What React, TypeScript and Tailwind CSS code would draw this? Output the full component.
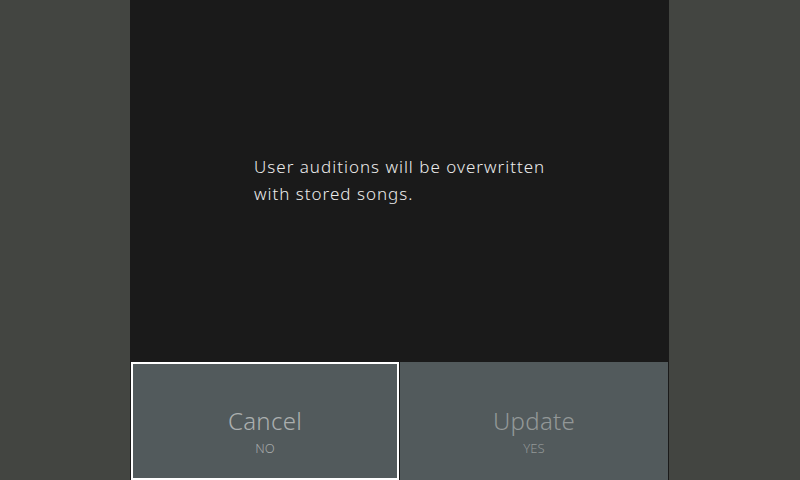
import React from 'react'

function DialogButton({
  label,
  sub,
  selected,
  dim,
}: {
  label: string
  sub: string
  selected?: boolean
  dim?: boolean
}) {
  return (
    <button
      className={
        'flex-1 flex flex-col items-center justify-center bg-[#525a5c] ' +
        (selected ? 'border-2 border-white' : 'border-2 border-transparent')
      }
    >
      <span
        className={
          'text-[24px] leading-[28px] pt-[20px] font-light tracking-[0.3px] ' +
          (dim ? 'text-[#939898]' : 'text-[#abafaf]')
        }
      >
        {label}
      </span>
      <span
        className={
          'text-[13px] leading-[16px] mt-[5px] font-light ' +
          (dim ? 'text-[#939898]' : 'text-[#a5a9a9]')
        }
      >
        {sub}
      </span>
    </button>
  )
}

export default function App() {
  return (
    <div
      className="w-[800px] h-[480px] flex bg-[#434541] overflow-hidden"
      style={{ fontFamily: '"Noto Sans", "DejaVu Sans", sans-serif' }}
    >
      <div className="w-[130px]" />
      <div className="w-[539px] h-full flex flex-col bg-[#1a1a1a]">
        <div className="flex-1 pl-[124px] pt-[153px]">
          <p className="text-[17px] leading-[27px] tracking-[1px] text-[#ececec] font-light w-[360px]">
            User auditions will be overwritten
            <br />
            with stored songs.
          </p>
        </div>
        <div className="h-[118px] flex gap-px pl-px pr-px">
          <DialogButton label="Cancel" sub="NO" selected />
          <DialogButton label="Update" sub="YES" dim />
        </div>
      </div>
    </div>
  )
}
